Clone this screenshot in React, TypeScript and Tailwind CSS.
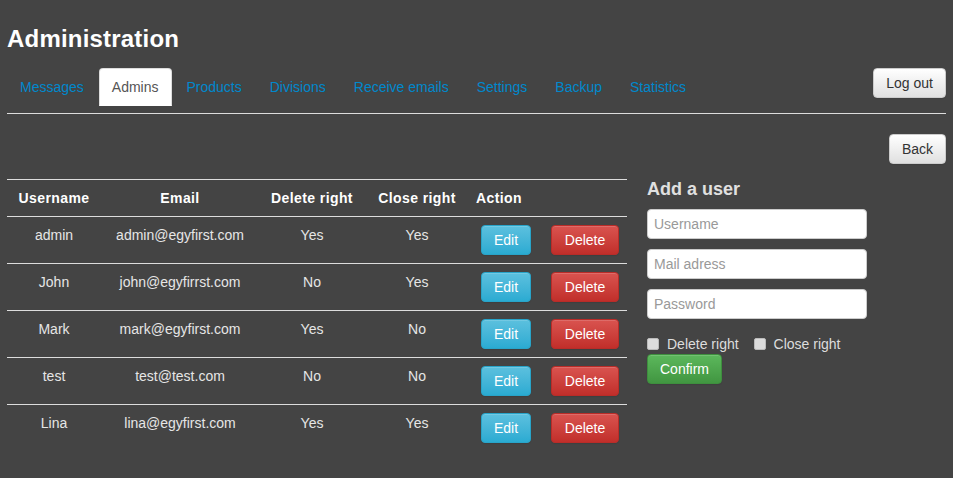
import React from "react";

const tabs = ["Messages", "Admins", "Products", "Divisions", "Receive emails", "Settings", "Backup", "Statistics"];

const users = [
  { name: "admin", email: "admin@egyfirst.com", del: "Yes", close: "Yes" },
  { name: "John", email: "john@egyfirrst.com", del: "No", close: "Yes" },
  { name: "Mark", email: "mark@egyfirst.com", del: "Yes", close: "No" },
  { name: "test", email: "test@test.com", del: "No", close: "No" },
  { name: "Lina", email: "lina@egyfirst.com", del: "Yes", close: "Yes" },
];

const btnBase =
  "border rounded-[4px] px-3 py-1 text-sm leading-5 shadow-[inset_0_1px_0_rgba(255,255,255,0.15),0_1px_1px_rgba(0,0,0,0.075)]";
const btnDefault = `${btnBase} bg-linear-to-b from-white to-[#e0e0e0] border-[#ccc] text-[#333]`;
const btnInfo = `${btnBase} bg-linear-to-b from-[#5bc0de] to-[#2aabd2] border-[#28a4c9] text-white`;
const btnDanger = `${btnBase} bg-linear-to-b from-[#d9534f] to-[#c12e2a] border-[#b92c28] text-white`;
const btnSuccess = `${btnBase} bg-linear-to-b from-[#5cb85c] to-[#419641] border-[#3e8f3e] text-white`;

const Check: React.FC<{ label: string }> = ({ label }) => (
  <label className="flex items-center gap-[8px]">
    <span className="w-[12px] h-[12px] rounded-[2px] bg-[#dcdcdc] border border-[#bbb]" />
    <span>{label}</span>
  </label>
);

const App: React.FC = () => {
  return (
    <div className="min-h-[478px] bg-[#444] px-[7px] text-sm leading-5 font-['Liberation_Sans',Arial,sans-serif]">
      <h1 className="pt-[26px] text-[24px] leading-[26px] font-bold tracking-[0.2px] text-white">Administration</h1>

      <div className="mt-[16px] flex items-start justify-between">
        <ul className="flex gap-[2px]">
          {tabs.map((t) => (
            <li key={t}>
              <a
                className={
                  t === "Admins"
                    ? "block px-3 py-2 border border-[#ddd] border-b-transparent rounded-t-[4px] bg-white text-[#555]"
                    : "block px-3 py-2 border border-transparent text-[#0088cc]"
                }
              >
                {t}
              </a>
            </li>
          ))}
        </ul>
        <button className={btnDefault}>Log out</button>
      </div>

      <div className="mt-[7px] border-t border-[#ddd]" />

      <div className="mt-[20px] flex justify-end">
        <button className={btnDefault}>Back</button>
      </div>

      <div className="mt-[15px] flex items-start gap-[20px]">
        <table className="w-[620px] table-fixed border-collapse border-t border-[#ddd] text-[#e6e6e6]">
          <thead>
            <tr className="text-white font-bold tracking-[0.4px]">
              <th className="w-[94px] p-2 text-center">Username</th>
              <th className="w-[158px] p-2 text-center">Email</th>
              <th className="w-[106px] p-2 text-center">Delete right</th>
              <th className="w-[104px] p-2 text-center">Close right</th>
              <th className="w-[74px] py-2 pl-[7px] text-left">Action</th>
              <th className="w-[84px] p-2" />
            </tr>
          </thead>
          <tbody>
            {users.map((u) => (
              <tr key={u.name} className="border-t border-[#ddd] align-top">
                <td className="p-2 text-center">{u.name}</td>
                <td className="p-2 text-center">{u.email}</td>
                <td className="p-2 text-center">{u.del}</td>
                <td className="p-2 text-center">{u.close}</td>
                <td className="py-2 text-center">
                  <button className={btnInfo}>Edit</button>
                </td>
                <td className="py-2 text-center">
                  <button className={`${btnDanger} px-[13px]`}>Delete</button>
                </td>
              </tr>
            ))}
          </tbody>
        </table>

        <div className="w-[220px]">
          <h3 className="text-[18px] leading-5 font-bold text-[#e0e0e0]">Add a user</h3>
          <div className="mt-[10px] flex flex-col gap-[10px]">
            {["Username", "Mail adress", "Password"].map((p) => (
              <input
                key={p}
                type={p === "Password" ? "password" : "text"}
                placeholder={p}
                className="h-[30px] w-full rounded-[4px] border border-[#ccc] bg-white px-[6px] text-sm text-[#555] placeholder:text-[#999] outline-none"
              />
            ))}
          </div>
          <div className="mt-[15px] flex gap-[15px] text-[#ddd]">
            <Check label="Delete right" />
            <Check label="Close right" />
          </div>
          <button className={btnSuccess}>Confirm</button>
        </div>
      </div>
    </div>
  );
};

export default App;
